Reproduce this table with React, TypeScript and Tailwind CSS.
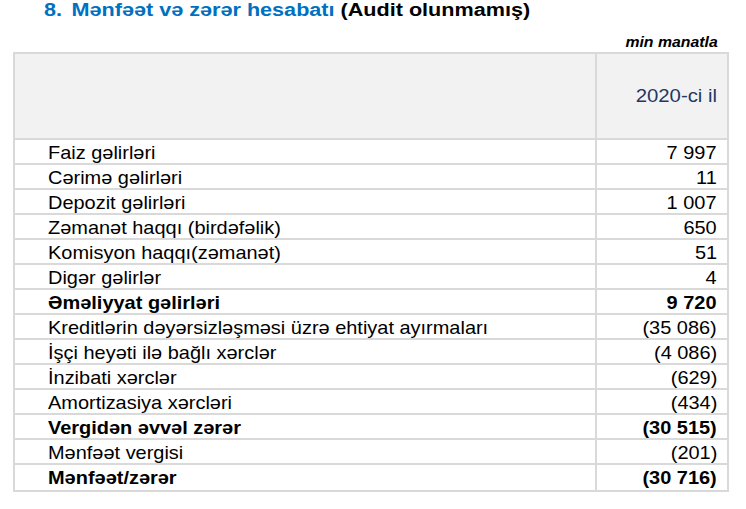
const rows = [
  { label: 'Faiz gəlirləri', value: '7 997' },
  { label: 'Cərimə gəlirləri', value: '11' },
  { label: 'Depozit gəlirləri', value: '1 007' },
  { label: 'Zəmanət haqqı (birdəfəlik)', value: '650' },
  { label: 'Komisyon haqqı(zəmanət)', value: '51' },
  { label: 'Digər gəlirlər', value: '4' },
  { label: 'Əməliyyat gəlirləri', value: '9 720', bold: true },
  { label: 'Kreditlərin dəyərsizləşməsi üzrə ehtiyat ayırmaları', value: '(35 086)' },
  { label: 'İşçi heyəti ilə bağlı xərclər', value: '(4 086)' },
  { label: 'İnzibati xərclər', value: '(629)' },
  { label: 'Amortizasiya xərcləri', value: '(434)' },
  { label: 'Vergidən əvvəl zərər', value: '(30 515)', bold: true },
  { label: 'Mənfəət vergisi', value: '(201)' },
  { label: 'Mənfəət/zərər', value: '(30 716)', bold: true },
];

const App = () => {
  return (
    <div className="w-[746px] h-[509px] bg-white font-['Liberation_Sans',Arial,sans-serif] text-black overflow-hidden">
      {/* Title */}
      <div className="pl-[44px] pt-[0px] h-[32px] text-[18px] font-bold leading-[20px] whitespace-nowrap">
        <span className="inline-block origin-left scale-x-[1.2]">
          <span className="text-[#0070c0]">8.</span>
          <span className="text-[#0070c0] ml-[8px]">Mənfəət və zərər hesabatı</span>{' '}
          <span>(Audit olunmamış)</span>
        </span>
      </div>

      <div className="w-[716px] ml-[13px] h-[20px] pr-[11px] text-right text-[14px] font-bold italic leading-[20px]">
        <span className="inline-block origin-right scale-x-[1.13]">min manatla</span>
      </div>

      {/* Table */}
      <div className="w-[716px] ml-[13px] border-2 border-[#d9d9d9] text-[19px]">
        <div className="flex h-[86px] bg-[#f2f2f2] border-b-2 border-[#d9d9d9]">
          <div className="w-[582px] border-r-2 border-[#d9d9d9]" />
          <div className="flex-1 flex items-center justify-end pr-[10px] text-[#1f3864]">
            <span className="inline-block origin-right scale-x-[1.07]">2020-ci il</span>
          </div>
        </div>
        {rows.map((row, i) => (
          <div
            key={i}
            className={`flex h-[25px] leading-[23px] ${i < rows.length - 1 ? 'border-b-2 border-[#d9d9d9]' : ''} ${row.bold ? 'font-bold' : ''}`}
          >
            <div className="w-[582px] pl-[33px] pt-[1px] border-r-2 border-[#d9d9d9] whitespace-nowrap">
              <span className="inline-block origin-left scale-x-[1.05]">{row.label}</span>
            </div>
            <div className="flex-1 pr-[10px] pt-[1px] text-right whitespace-nowrap">
              <span className="inline-block origin-right scale-x-[1.05]">{row.value}</span>
            </div>
          </div>
        ))}
      </div>
    </div>
  );
};

export default App;
